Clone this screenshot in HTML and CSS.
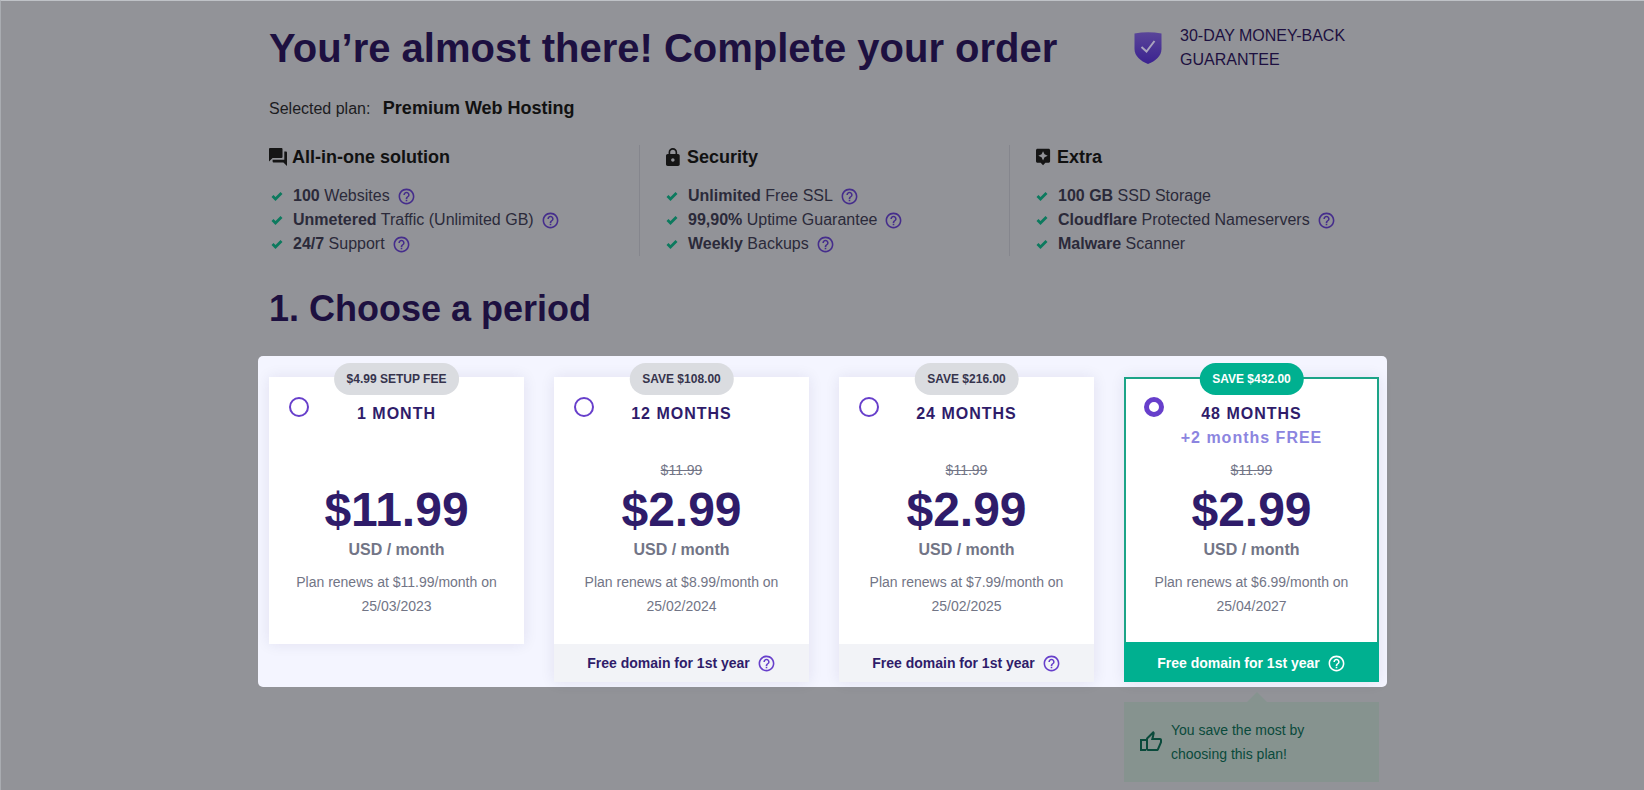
FILE: index.html
```
<!DOCTYPE html>
<html lang="en">
<head>
    <meta charset="UTF-8">
    <meta name="viewport" content="width=device-width, initial-scale=1.0">
    <title>Complete your order</title>
    <link rel="stylesheet" href="styles.css">
</head>
<body>
    <svg width="0" height="0" class="sprite">
        <symbol id="check" viewBox="0 0 12 10">
            <path d="M1.5 5l3 3 6-6" fill="none" stroke="currentColor" stroke-width="2.8"/>
        </symbol>
        <symbol id="question" viewBox="0 0 24 24">
            <path fill="currentColor" d="M11 18h2v-2h-2v2zm1-16C6.48 2 2 6.48 2 12s4.480 10 10 10 10-4.480 10-10S17.520 2 12 2zm0 18c-4.410 0-8-3.590-8-8s3.590-8 8-8 8 3.590 8 8-3.590 8-8 8zm0-14c-2.210 0-4 1.790-4 4h2c0-1.100.9-2 2-2s2 .9 2 2c0 2-3 1.750-3 5h2c0-2.250 3-2.500 3-5 0-2.210-1.790-4-4-4z"/>
        </symbol>
    </svg>

    <div class="container">
        <div class="header">
            <h1>You’re almost there! Complete your order</h1>
            <div class="guarantee">
                <svg class="shield" viewBox="0 0 28 32">
                    <defs>
                        <linearGradient id="shield-fill" x1="0" y1="0" x2="0" y2="1">
                            <stop offset="0" stop-color="#594599"/>
                            <stop offset="1" stop-color="#3b2290"/>
                        </linearGradient>
                    </defs>
                    <path d="M.5 1.500Q14-1 27.500 1.500V17c0 7-6 12-13.500 15C6.500 29 .5 24 .5 17z" fill="url(#shield-fill)"/>
                    <path d="M7.500 15l5 4.500L20.500 9" fill="none" stroke="#a9a4bd" stroke-width="2"/>
                </svg>
                <p>30-DAY MONEY-BACK GUARANTEE</p>
            </div>
        </div>

        <p class="plan">Selected plan: <strong>Premium Web Hosting</strong></p>

        <div class="features">
            <div class="feature">
                <h3>
                    <svg class="feature-icon" viewBox="2 2 20 20"><path d="M21 6h-2v9H6v2c0 .55.45 1 1 1h11l4 4V7c0-.55-.45-1-1-1zm-4 6V3c0-.55-.45-1-1-1H3c-.55 0-1 .45-1 1v14l4-4h10c.55 0 1-.45 1-1z"/></svg>
                    All-in-one solution
                </h3>
                <ul>
                    <li><svg class="check"><use href="#check"/></svg><span><b>100</b> Websites</span><button class="help" aria-label="Help"><svg><use href="#question"/></svg></button></li>
                    <li><svg class="check"><use href="#check"/></svg><span><b>Unmetered</b> Traffic (Unlimited GB)</span><button class="help" aria-label="Help"><svg><use href="#question"/></svg></button></li>
                    <li><svg class="check"><use href="#check"/></svg><span><b>24/7</b> Support</span><button class="help" aria-label="Help"><svg><use href="#question"/></svg></button></li>
                </ul>
            </div>
            <div class="feature">
                <h3>
                    <svg class="feature-icon" viewBox="4 1 16 21" preserveAspectRatio="xMinYMid"><path d="M18 8h-1V6c0-2.760-2.240-5-5-5S7 3.240 7 6v2H6c-1.100 0-2 .9-2 2v10c0 1.100.9 2 2 2h12c1.100 0 2-.9 2-2V10c0-1.100-.9-2-2-2zm-6 9c-1.100 0-2-.9-2-2s.9-2 2-2 2 .9 2 2-.9 2-2 2zm3.100-9H8.900V6c0-1.710 1.390-3.100 3.100-3.100s3.100 1.390 3.100 3.100v2z"/></svg>
                    Security
                </h3>
                <ul>
                    <li><svg class="check"><use href="#check"/></svg><span><b>Unlimited</b> Free SSL</span><button class="help" aria-label="Help"><svg><use href="#question"/></svg></button></li>
                    <li><svg class="check"><use href="#check"/></svg><span><b>99,90%</b> Uptime Guarantee</span><button class="help" aria-label="Help"><svg><use href="#question"/></svg></button></li>
                    <li><svg class="check"><use href="#check"/></svg><span><b>Weekly</b> Backups</span><button class="help" aria-label="Help"><svg><use href="#question"/></svg></button></li>
                </ul>
            </div>
            <div class="feature">
                <h3>
                    <svg class="feature-icon" viewBox="3 1 18 23" preserveAspectRatio="xMinYMid"><path d="M19 2H5c-1.100 0-2 .9-2 2v14c0 1.100.9 2 2 2h4l3 3 3-3h4c1.100 0 2-.9 2-2V4c0-1.100-.9-2-2-2zm-5.120 10.880L12 17l-1.880-4.120L6 11l4.120-1.880L12 5l1.880 4.120L18 11l-4.120 1.880z"/></svg>
                    Extra
                </h3>
                <ul>
                    <li><svg class="check"><use href="#check"/></svg><span><b>100 GB</b> SSD Storage</span></li>
                    <li><svg class="check"><use href="#check"/></svg><span><b>Cloudflare</b> Protected Nameservers</span><button class="help" aria-label="Help"><svg><use href="#question"/></svg></button></li>
                    <li><svg class="check"><use href="#check"/></svg><span><b>Malware</b> Scanner</span></li>
                </ul>
            </div>
        </div>

        <h2>1. Choose a period</h2>

        <div class="periods">
            <div class="card">
                <span class="badge">$4.99 SETUP FEE</span>
                <input type="radio" name="period" id="period-1">
                <label class="card-body" for="period-1">
                    <span class="months">1 MONTH</span>
                    <span class="bonus"></span>
                    <span class="old-price"></span>
                    <span class="price">$11.99</span>
                    <span class="unit">USD / month</span>
                    <span class="renew">Plan renews at $11.99/month on 25/03/2023</span>
                </label>
            </div>
            <div class="card">
                <span class="badge">SAVE $108.00</span>
                <input type="radio" name="period" id="period-12">
                <label class="card-body" for="period-12">
                    <span class="months">12 MONTHS</span>
                    <span class="bonus"></span>
                    <s class="old-price">$11.99</s>
                    <span class="price">$2.99</span>
                    <span class="unit">USD / month</span>
                    <span class="renew">Plan renews at $8.99/month on 25/02/2024</span>
                </label>
                <div class="card-footer">Free domain for 1st year <button class="help" aria-label="Help"><svg><use href="#question"/></svg></button></div>
            </div>
            <div class="card">
                <span class="badge">SAVE $216.00</span>
                <input type="radio" name="period" id="period-24">
                <label class="card-body" for="period-24">
                    <span class="months">24 MONTHS</span>
                    <span class="bonus"></span>
                    <s class="old-price">$11.99</s>
                    <span class="price">$2.99</span>
                    <span class="unit">USD / month</span>
                    <span class="renew">Plan renews at $7.99/month on 25/02/2025</span>
                </label>
                <div class="card-footer">Free domain for 1st year <button class="help" aria-label="Help"><svg><use href="#question"/></svg></button></div>
            </div>
            <div class="card selected">
                <span class="badge">SAVE $432.00</span>
                <input type="radio" name="period" id="period-48" checked>
                <label class="card-body" for="period-48">
                    <span class="months">48 MONTHS</span>
                    <span class="bonus">+2 months FREE</span>
                    <s class="old-price">$11.99</s>
                    <span class="price">$2.99</span>
                    <span class="unit">USD / month</span>
                    <span class="renew">Plan renews at $6.99/month on 25/04/2027</span>
                </label>
                <div class="card-footer">Free domain for 1st year <button class="help" aria-label="Help"><svg><use href="#question"/></svg></button></div>
            </div>
        </div>

        <div class="tip-row">
            <div class="tip">
                <svg class="thumb" viewBox="0 0 24 24"><path d="M9 21h9c.83 0 1.540-.5 1.840-1.220l3.020-7.050c.09-.23.14-.47.14-.73v-2c0-1.100-.9-2-2-2h-6.310l.95-4.570.03-.32c0-.41-.17-.79-.44-1.060L14.170 1 7.580 7.590C7.220 7.950 7 8.450 7 9v10c0 1.100.9 2 2 2zM9 9l4.340-4.340L12 10h9v2l-3 7H9V9zM1 9h6v12H1zM3 11v8h4v-8z" fill-rule="evenodd"/></svg>
                <p>You save the most by choosing this plan!</p>
            </div>
        </div>
    </div>
</body>
</html>
```

FILE: styles.css
```
* {
    box-sizing: border-box;
}
body {
    margin: 0;
    padding: 0 0 0 3px;
    min-height: 100vh;
    border-top: 1px solid #bfc2c7;
    border-left: 1px solid #a9acb1;
    background: #929398;
    font-family: "Liberation Sans", Arial, sans-serif;
    font-size: 16px;
    line-height: 24px;
    color: #2b2a3a;
}
h1, h2, h3, p, ul {
    margin: 0;
    padding: 0;
}
.sprite {
    position: absolute;
}
.container {
    max-width: 1110px;
    margin: 0 auto;
}
.header {
    display: flex;
    justify-content: space-between;
    padding-top: 23px;
}
h1 {
    font-size: 40px;
    line-height: 48px;
    color: #1d1040;
}
.guarantee {
    display: flex;
    align-items: center;
    gap: 18px;
    width: 245px;
    color: #1d1040;
}
.shield {
    flex: none;
    width: 28px;
    height: 32px;
}
.plan {
    margin-top: 23px;
    line-height: 26px;
    color: #1c1c1f;
}
.plan strong {
    margin-left: 8px;
    font-size: 18px;
    color: #111;
}
.features {
    display: grid;
    grid-template-columns: repeat(3, 1fr);
    margin-top: 23px;
}
.feature + .feature {
    border-left: 1px solid #85868d;
    padding-left: 26px;
}
.feature h3 {
    display: flex;
    align-items: center;
    gap: 5px;
    margin-bottom: 15px;
    font-size: 18px;
    line-height: 24px;
    color: #111;
}
.feature-icon {
    width: 18px;
    height: 18px;
    fill: #151515;
}
.feature + .feature .feature-icon {
    width: 16px;
}
.feature ul {
    list-style: none;
}
.feature li {
    display: flex;
    align-items: center;
    padding-left: 2px;
}
.feature + .feature li {
    padding-left: 0;
}
.check {
    width: 12px;
    height: 10px;
    margin-right: 10px;
    color: #0c7a5e;
}
.help {
    display: flex;
    margin-left: 7px;
    padding: 0;
    border: none;
    background: none;
    color: #452d8c;
    cursor: pointer;
}
.help svg {
    width: 19px;
    height: 19px;
}
h2 {
    margin-top: 31px;
    font-size: 36px;
    line-height: 44px;
    color: #1d1040;
}
.periods {
    display: flex;
    align-items: flex-start;
    gap: 30px;
    margin: 25px -8px 0 -11px;
    padding: 21px 8px 5px 11px;
    border-radius: 5px;
    background: #f4f5ff;
}
.card {
    position: relative;
    flex: 1;
    box-shadow: 0 0 14px rgba(36, 22, 90, 0.09);
}
.badge {
    position: absolute;
    top: -14px;
    left: 50%;
    transform: translateX(-50%);
    padding: 0 13px;
    border-radius: 16px;
    background: #dadce0;
    font-size: 12px;
    font-weight: bold;
    line-height: 32px;
    white-space: nowrap;
    color: #36344d;
}
.card input {
    appearance: none;
    position: absolute;
    top: 20px;
    left: 20px;
    width: 20px;
    height: 20px;
    margin: 0;
    border: 2px solid #673fcb;
    border-radius: 50%;
}
.card input:checked {
    border-width: 5px;
}
.card-body {
    display: flex;
    flex-direction: column;
    padding: 23px 20px 24px;
    border: 2px solid #fff;
    background: #fff;
    text-align: center;
    cursor: pointer;
}
.months, .bonus {
    height: 24px;
    font-weight: bold;
    letter-spacing: 1px;
    color: #2f1c6a;
}
.bonus {
    color: #8c85e0;
}
.old-price {
    height: 24px;
    margin-top: 8px;
    font-size: 14px;
    color: #727586;
}
.price {
    font-size: 48px;
    font-weight: bold;
    line-height: 56px;
    color: #2f1c6a;
}
.unit {
    font-weight: bold;
    color: #727586;
}
.renew {
    margin-top: 8px;
    font-size: 14px;
    color: #727586;
}
.card-footer {
    display: flex;
    justify-content: center;
    align-items: center;
    height: 38px;
    background: #f2f3f7;
    font-size: 14px;
    font-weight: bold;
    color: #2f1c6a;
}
.card-footer .help {
    color: #673fcb;
}
.selected .badge, .selected .card-footer {
    background: #00b090;
    color: #fff;
}
.selected .card-body {
    border-color: #1ca487;
    border-bottom-color: #00b090;
}
.selected .help {
    color: #fff;
}
.tip-row {
    display: flex;
    justify-content: flex-end;
    margin-top: 15px;
}
.tip {
    position: relative;
    display: flex;
    align-items: center;
    gap: 8px;
    width: 255px;
    padding: 16px 15px;
    background: #86938f;
    font-size: 14px;
    color: #0a4a3b;
}
.tip::before {
    content: "";
    position: absolute;
    top: -10px;
    left: 123px;
    border: 10px solid transparent;
    border-top: none;
    border-bottom-color: #86938f;
}
.thumb {
    flex: none;
    width: 24px;
    height: 24px;
    fill: #0a4a3b;
}
.tip p {
    max-width: 150px;
}
```
